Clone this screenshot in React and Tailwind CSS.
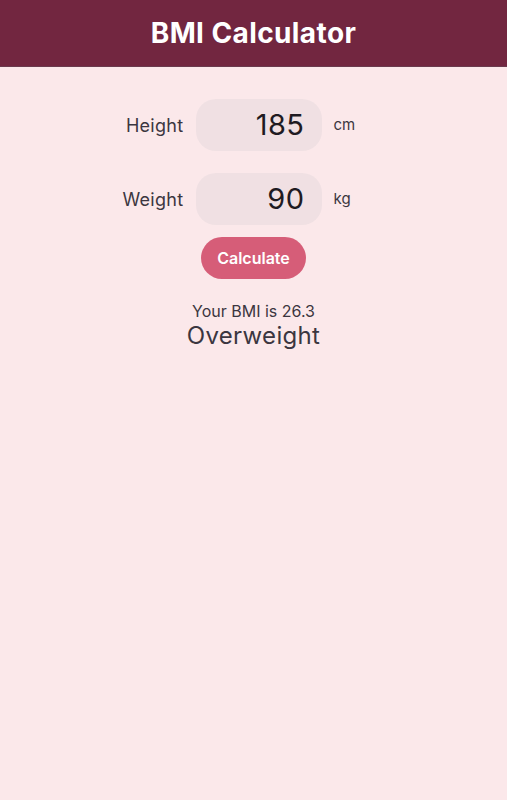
import { useState } from "react";

const font = { fontFamily: "Inter, 'Noto Sans', sans-serif" };

const Row = ({ label, value, unit }) => {
    return (
        <div className="grid grid-cols-[1fr_126px_1fr] items-center gap-3 pl-[10px]">
            <span className="text-right text-[18px] tracking-[0.3px] text-[#3b3640]">{label}</span>
            <div className="h-[52px] rounded-[20px] bg-[#f0e0e3] flex items-center justify-end pr-[17px] text-[29px] tracking-[0.5px] text-[#1f1b22]">
                {value}
            </div>
            <span className="text-[15px] text-[#3b3640]">{unit}</span>
        </div>
    )
}

export default function App() {
    const [height] = useState(185);
    const [weight] = useState(90);
    const bmi = (weight / ((height / 100) * (height / 100))).toFixed(1);

    return (
        <div style={font} className="w-[507px] h-[800px] bg-[#fbe8ea] flex flex-col">
            <header className="h-[67px] bg-[#722640] border-b border-[#6a3a4e] flex items-center justify-center">
                <h1 className="text-white text-[28px] font-bold tracking-[0.4px]">BMI Calculator</h1>
            </header>
            <div className="pt-[32px] flex flex-col">
                <Row label="Height" value={height} unit="cm" />
                <div className="h-[22px]" />
                <Row label="Weight" value={weight} unit="kg" />
                <div className="flex justify-center pt-[12px]">
                    <button className="w-[105px] h-[42px] rounded-full bg-[#d65d78] text-white text-[16px] font-semibold">
                        Calculate
                    </button>
                </div>
                <div className="flex flex-col items-center pt-[22px] text-[#3b3640]">
                    <span className="text-[16px] leading-[20px]">Your BMI is {bmi}</span>
                    <span className="text-[24px] leading-[30px] tracking-[0.3px]">Overweight</span>
                </div>
            </div>
        </div>
    )
}
